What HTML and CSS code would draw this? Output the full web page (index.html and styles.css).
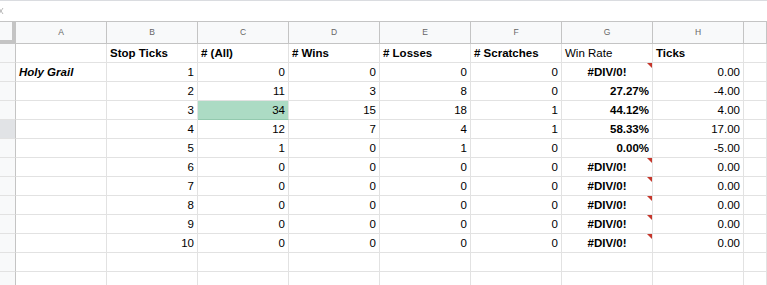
FILE: index.html
```html
<!DOCTYPE html>
<html>
<head>
    <title>Holy Grail - Stop Ticks</title>
    <link rel="stylesheet" href="styles.css">
</head>
<body>
    <div class="formula-bar">
        <svg class="fx" width="4" height="6" viewBox="0 0 4 6">
            <path d="M-1 0 L3 6 M3 0 L-1 6" stroke="#b8b8b8" stroke-width="1" fill="none"/>
        </svg>
    </div>
    <div class="sheet" id="sheet"></div>

    <script>
        const letters = ['A', 'B', 'C', 'D', 'E', 'F', 'G', 'H', ''];

        // each cell: [text, class]
        const rows = [
            [['', ''], ['Stop Ticks', 'bold'], ['# (All)', 'bold'], ['# Wins', 'bold'], ['# Losses', 'bold'],
             ['# Scratches', 'bold'], ['Win Rate', ''], ['Ticks', 'bold']],
            [['Holy Grail', 'title'], 1, 0, 0, 0, 0, ['#DIV/0!', 'err'], '0.00'],
            ['', 2, 11, 3, 8, 0, ['27.27%', 'pct'], '-4.00'],
            ['', 3, [34, 'num hit'], 15, 18, 1, ['44.12%', 'pct'], '4.00'],
            ['', 4, 12, 7, 4, 1, ['58.33%', 'pct'], '17.00'],
            ['', 5, 1, 0, 1, 0, ['0.00%', 'pct'], '-5.00'],
            ['', 6, 0, 0, 0, 0, ['#DIV/0!', 'err'], '0.00'],
            ['', 7, 0, 0, 0, 0, ['#DIV/0!', 'err'], '0.00'],
            ['', 8, 0, 0, 0, 0, ['#DIV/0!', 'err'], '0.00'],
            ['', 9, 0, 0, 0, 0, ['#DIV/0!', 'err'], '0.00'],
            ['', 10, 0, 0, 0, 0, ['#DIV/0!', 'err'], '0.00'],
            [],
            [],
            []
        ];

        const sheet = document.getElementById('sheet');

        function addCell(text, cls) {
            const div = document.createElement('div');
            div.className = cls;
            div.textContent = text;
            sheet.appendChild(div);
        }

        addCell('', 'corner');
        letters.forEach(l => addCell(l, 'col-head'));

        rows.forEach((row, i) => {
            addCell('', i === 4 ? 'row-head active' : 'row-head');
            for (let c = 0; c < 9; c++) {
                let v = row[c];
                if (v === undefined || v === '') {
                    addCell('', 'cell');
                } else if (Array.isArray(v)) {
                    addCell(v[0], 'cell ' + v[1]);
                } else {
                    addCell(v, 'cell num');
                }
            }
        });
    </script>
</body>
</html>
```

FILE: styles.css
```css
body {
    margin: 0;
    font-family: 'Liberation Sans', Arial, sans-serif;
    background: white;
    overflow: hidden;
}

.formula-bar {
    height: 22px;
    box-sizing: border-box;
    border-top: 1px solid #dadce0;
    border-bottom: 1px solid #c4c4c4;
    background: white;
}

.fx {
    display: block;
    margin-top: 7px;
}

.sheet {
    display: grid;
    grid-template-columns: 16px repeat(8, 91px) 1fr;
    grid-template-rows: 22px;
    grid-auto-rows: 19px;
    height: 263px;
    overflow: hidden;
}

.sheet > div {
    box-sizing: border-box;
    white-space: nowrap;
    overflow: hidden;
}

.corner {
    background: #f8f9fa;
    border-right: 4px solid #c4c4c4;
    border-bottom: 4px solid #c4c4c4;
}

.col-head {
    background: #f8f9fa;
    border-right: 1px solid #c4c4c4;
    border-bottom: 1px solid #c4c4c4;
    color: #666;
    font-size: 8.5px;
    line-height: 21px;
    text-align: center;
}

.row-head {
    background: #f8f9fa;
    border-right: 1px solid #c4c4c4;
    border-bottom: 1px solid #e2e2e2;
}

.row-head.active {
    background: #e1e3e6;
}

.cell {
    position: relative;
    border-right: 1px solid #e2e2e2;
    border-bottom: 1px solid #e2e2e2;
    padding: 0 3px;
    font-size: 11.5px;
    line-height: 18px;
    color: #000;
}

.num {
    text-align: right;
}

.bold {
    font-weight: bold;
}

.title {
    font-weight: bold;
    font-style: italic;
}

.pct {
    text-align: right;
    font-weight: bold;
}

.err {
    text-align: center;
    font-weight: bold;
}

.err::after {
    content: '';
    position: absolute;
    top: 0;
    right: 0;
    border-top: 5px solid #c5362b;
    border-left: 5px solid transparent;
}

.hit {
    background: #acdbc4;
    border-bottom-color: #93c9ae;
}
```
